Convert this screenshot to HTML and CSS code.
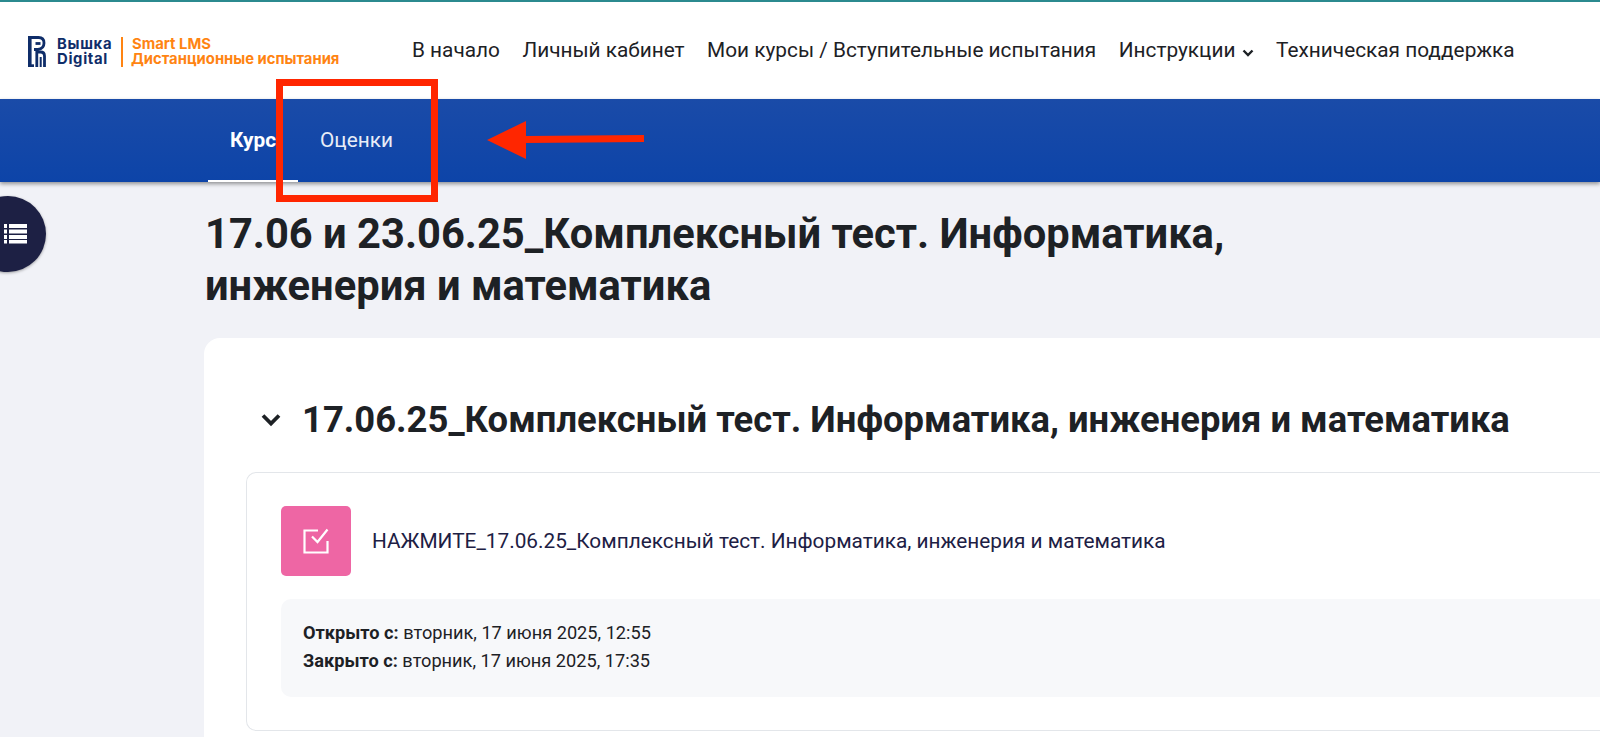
FILE: index.html
```html
<!DOCTYPE html>
<html lang="ru">
<head>
  <meta charset="UTF-8" />
  <meta name="viewport" content="width=device-width, initial-scale=1.0"/>
  <title>Комплексный тест</title>
  <link rel="stylesheet" href="styles.css">
</head>
<body>
  <header class="topbar">
    <a class="brand">
      <svg class="brand-mark" viewBox="0 0 18 31" width="18" height="31" fill="none" stroke="#0f2d69" stroke-width="2.800">
        <path stroke-width="3.600" d="M1.800 31V1.500"/>
        <path d="M0 1.500H10.500C14 1.500 16 3.500 16 7 16 10.500 13.500 13 10 13.500H6"/>
        <path d="M7.500 7.500H12.500"/>
        <path d="M0 29.700H6"/>
        <path d="M8.800 31V16H12.500C15 16 16.500 17.500 16.500 20V31"/>
        <path stroke-width="2" d="M12.700 31V21"/>
      </svg>
      <span class="brand-name">Вышка<br>Digital</span>
      <span class="brand-sub">Smart LMS<br><span class="brand-sub-long">Дистанционные испытания</span></span>
    </a>
    <nav class="topnav">
      <a>В начало</a>
      <a>Личный кабинет</a>
      <a>Мои курсы / Вступительные испытания</a>
      <a>Инструкции
        <svg class="caret" viewBox="0 0 12 8" width="12" height="8"><path d="M1.500 1.500 6 6l4.500-4.500" fill="none" stroke="#1d2125" stroke-width="2.400"/></svg>
      </a>
      <a>Техническая поддержка</a>
    </nav>
  </header>

  <div class="tabs">
    <a class="tab active">Курс</a>
    <a class="tab">Оценки</a>
  </div>

  <button class="drawer-toggle">
    <svg viewBox="0 0 23 20" width="23" height="20" fill="#fff">
      <rect x="0" y="0" width="3" height="4"/><rect x="5" y="0" width="18" height="4"/>
      <rect x="0" y="5.500" width="3" height="4"/><rect x="5" y="5.500" width="18" height="4"/>
      <rect x="0" y="11" width="3" height="4"/><rect x="5" y="11" width="18" height="4"/>
      <rect x="0" y="16" width="3" height="3.500"/><rect x="5" y="16" width="18" height="3.500"/>
    </svg>
  </button>

  <main class="page">
    <h1>17.06 и 23.06.25_Комплексный тест. Информатика, инженерия и математика</h1>

    <section class="course-card">
      <h2 class="section-title">
        <svg class="section-caret" viewBox="0 0 20 14" width="20" height="14"><path d="M2 2.500 10 10.500l8-8" fill="none" stroke="#1d2125" stroke-width="3.800"/></svg>
        17.06.25_Комплексный тест. Информатика, инженерия и математика
      </h2>

      <div class="activity">
        <div class="activity-head">
          <span class="activity-icon">
            <svg viewBox="0 0 26 26" width="26" height="26" fill="none" stroke="#fff" stroke-width="2.200">
              <path d="M15 2.500H1.500V24.500H24.500V13"/>
              <path d="M9 8.500l5.500 5.500L24.500 1.500"/>
            </svg>
          </span>
          <a class="activity-name">НАЖМИТЕ_17.06.25_Комплексный тест. Информатика, инженерия и математика</a>
        </div>
        <div class="dates">
          <div><strong>Открыто с:</strong> вторник, 17 июня 2025, 12:55</div>
          <div><strong>Закрыто с:</strong> вторник, 17 июня 2025, 17:35</div>
        </div>
      </div>
    </section>
  </main>

  <!-- red marks drawn on top of the screenshot -->
  <svg class="callout" viewBox="0 0 1600 737" width="1600" height="737">
    <rect x="279.500" y="82.500" width="155" height="116" fill="none" stroke="#ff2600" stroke-width="7"/>
    <path fill="#ff2600" d="M487 140 526 121v15l118-1v7l-118 1v16z"/>
  </svg>
</body>
</html>
```

FILE: styles.css
```css
* {
  margin: 0;
  padding: 0;
  box-sizing: border-box;
}

html, body {
  height: 737px;
  overflow: hidden;
}

body {
  font-family: Roboto, "Noto Sans", sans-serif;
  background: #f1f2f7;
  color: #1d2125;
  position: relative;
  display: flex;
  flex-direction: column;
}

.topbar {
  height: 99px;
  flex: none;
  background: #fff;
  border-top: 2px solid #2b8a8f;
  display: flex;
  align-items: center;
  padding-left: 28px;
}

.brand {
  display: flex;
  align-items: center;
  width: 384px;
  font-family: Inter, "Open Sans", sans-serif;
  font-weight: 700;
  padding-top: 2px;
}

.brand-mark {
  margin-right: 11px;
}

.brand-name {
  font-size: 14.800px;
  letter-spacing: 0.700px;
  line-height: 15px;
  color: #0f2d69;
  width: 64px;
}

.brand-sub {
  font-size: 14.800px;
  line-height: 15px;
  color: #ff8412;
  border-left: 2px solid #ff8412;
  padding-left: 9px;
  white-space: nowrap;
}

.brand-sub-long {
  margin-left: -1px;
}

.topnav {
  display: flex;
  align-items: center;
  gap: 22.500px;
  font-size: 20.800px;
  padding-bottom: 1px;
}

.caret {
  margin-left: 1px;
}

.tabs {
  height: 83px;
  flex: none;
  background: linear-gradient(to bottom, #1a4ba8, #0d44a8);
  box-shadow: 0 2px 4px rgba(0, 0, 0, 0.4);
  display: flex;
  padding-left: 208px;
  position: relative;
}

.tab {
  display: flex;
  align-items: center;
  padding: 0 22px;
  color: #e8edf7;
  font-size: 20.800px;
  border-bottom: 2px solid transparent;
}

.tab.active {
  color: #fff;
  font-weight: 700;
  border-bottom-color: #fff;
}

.drawer-toggle {
  position: absolute;
  left: -30px;
  top: 196px;
  width: 76px;
  height: 76px;
  border: none;
  border-radius: 50%;
  background: #1d2044;
  box-shadow: 0 1px 3px rgba(0, 0, 0, 0.35);
  display: flex;
  align-items: center;
  justify-content: flex-end;
  padding-right: 19px;
}

.page {
  flex: 1;
  min-height: 0;
  display: flex;
  flex-direction: column;
  padding: 26px 0 0 205px;
}

h1 {
  font-size: 41.700px;
  line-height: 52px;
  font-weight: 700;
  width: 1100px;
  margin-bottom: 26px;
}

.course-card {
  flex: 1;
  margin-left: -1px;
  background: #fff;
  border-radius: 16px 0 0 0;
  padding: 61px 0 0 42px;
}

.section-title {
  font-size: 36.400px;
  line-height: 42px;
  font-weight: 700;
  display: flex;
  align-items: center;
  gap: 21px;
  padding-left: 15px;
  margin-bottom: 31px;
  white-space: nowrap;
}

.activity {
  background: #fff;
  border: 1px solid #e3e6ea;
  border-right: none;
  border-radius: 10px 0 0 10px;
  padding: 33px 0 33px 34px;
}

.activity-head {
  display: flex;
  align-items: center;
  gap: 22px;
  margin-bottom: 23px;
}

.activity-icon {
  width: 70px;
  height: 70px;
  border-radius: 5px;
  background: #ee66a4;
  display: flex;
  align-items: center;
  justify-content: center;
}

.activity-name {
  font-size: 20.800px;
  color: #1d2044;
  margin-left: -1px;
}

.dates {
  background: #f7f8fa;
  border-radius: 10px 0 0 10px;
  padding: 20px 22px 22px;
  font-size: 18.200px;
  line-height: 28px;
}

.callout {
  position: absolute;
  top: 0;
  left: 0;
  pointer-events: none;
}
```
